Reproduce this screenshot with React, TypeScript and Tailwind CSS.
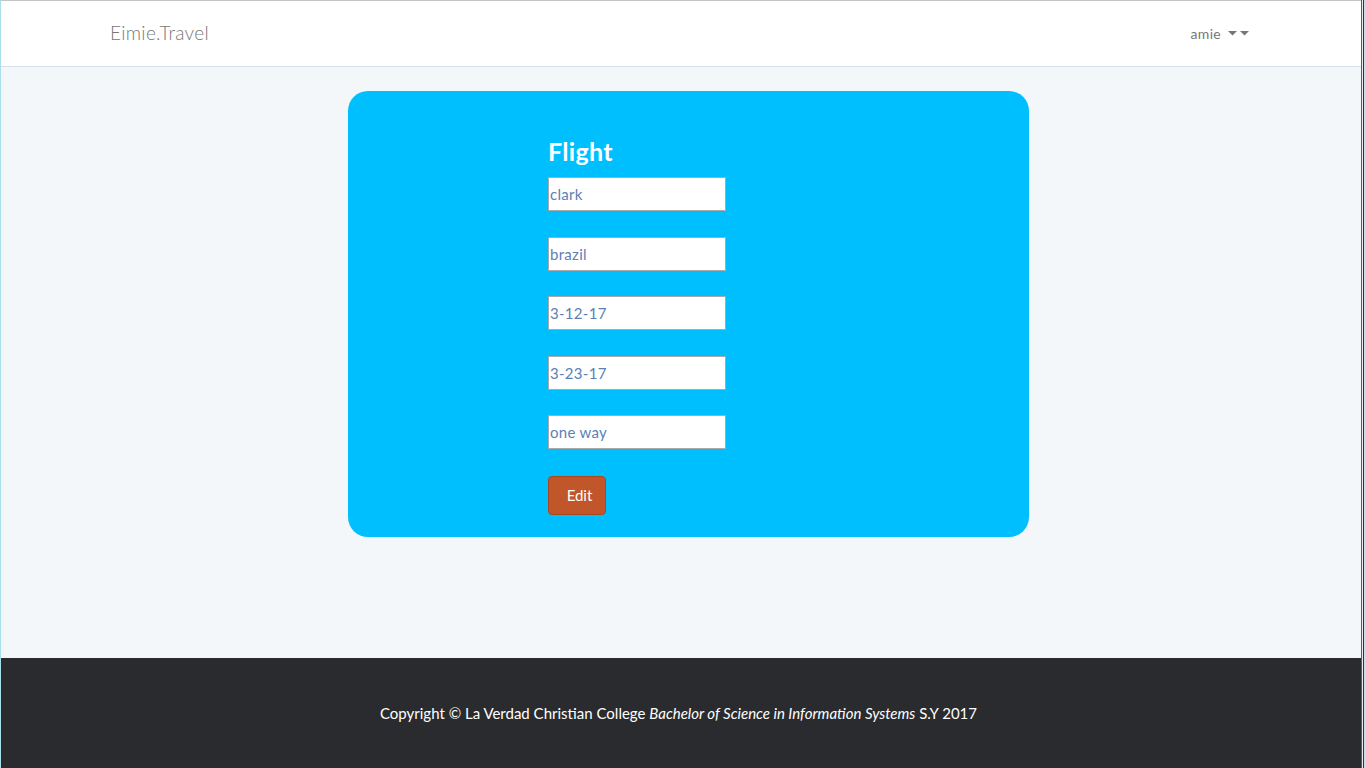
const fields = ['clark', 'brazil', '3-12-17', '3-23-17', 'one way'];

function Caret() {
  return (
    <svg width="9" height="5" viewBox="0 0 9 5" className="fill-[#777]">
      <path d="M0 0h9L4.5 4.5z" />
    </svg>
  );
}

export default function App() {
  return (
    <div
      className="flex h-[768px] w-[1366px] overflow-hidden bg-[#cfdae6]"
      style={{ fontFamily: 'Lato, "Open Sans", "Liberation Sans", sans-serif' }}
    >
      <div className="flex h-full w-[1361px] flex-col border-l border-t border-l-[#a9dfea] border-t-[#c4c4c4] bg-[#f3f7fa]">
        <nav className="flex h-[66px] shrink-0 items-center justify-between border-b border-[#d5e2ee] bg-white pl-[109px] pr-[112px]">
          <a className="text-[19px] font-light tracking-[0.3px] text-[#777]">Eimie.Travel</a>
          <div className="flex items-center gap-[3px] text-[14px] text-[#777]">
            <span className="mr-[4px] tracking-[0.3px]">amie</span>
            <Caret />
            <Caret />
          </div>
        </nav>

        <main className="flex flex-1 justify-center pt-[24px] pl-[15px]">
          <section className="h-[446px] w-[681px] rounded-[20px] bg-[#00bfff] pl-[200px] pt-[44px]">
            <h2 className="mb-[10px] text-[25px] font-bold leading-[32px] tracking-[0.3px] text-white">Flight</h2>
            <form className="flex flex-col gap-[25.5px]">
              {fields.map((value) => (
                <input
                  key={value}
                  readOnly
                  value={value}
                  className="h-[34px] w-[178px] border border-[#a9a9a9] bg-white px-[1px] text-[15px] tracking-[0.3px] text-[#5b7fb6] outline-none"
                />
              ))}
              <button
                type="button"
                className="mt-[1px] h-[39px] w-[58px] rounded-[4px] border border-[#a9471f] bg-[#c0562a] pl-[5px] text-[15px] text-white"
              >
                Edit
              </button>
            </form>
          </section>
        </main>

        <footer className="flex h-[110px] shrink-0 items-center justify-center bg-[#2a2b2e] pr-[5px] text-[15px] text-white">
          <p>
            Copyright © La Verdad Christian College <em>Bachelor of Science in Information Systems</em> S.Y 2017
          </p>
        </footer>
      </div>
      <div className="h-full w-[1px] bg-[#555c66]" />
      <div className="h-full w-[1px] bg-[#e6ebf0]" />
      <div className="h-full w-[1px] bg-[#2e3640]" />
    </div>
  );
}
